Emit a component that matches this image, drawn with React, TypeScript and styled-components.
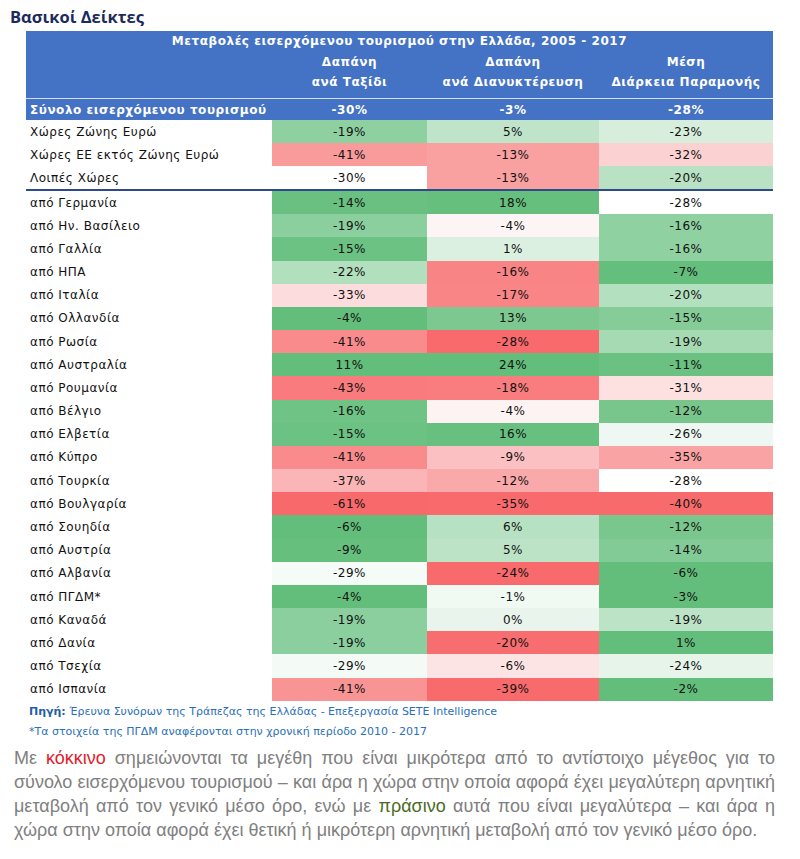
import React from "react";
import styled, { createGlobalStyle } from "styled-components";

const Global = createGlobalStyle`
  html, body { margin: 0; padding: 0; background: #ffffff; }
  body { font-family: "DejaVu Sans", Verdana, sans-serif; }
`;

const Page = styled.div`
  width: 800px;
  padding-top: 5px;
`;

const Heading = styled.h2`
  margin: 0 0 2px 10px;
  font-family: "Open Sans", "DejaVu Sans", sans-serif;
  font-weight: 700;
  font-size: 16.5px;
  line-height: 24px;
  color: #1c2b5c;
`;

const Table = styled.div`
  margin-left: 26px;
  width: 747px;
  font-family: "DejaVu Sans", Verdana, sans-serif;
  font-size: 12px;
  letter-spacing: 0.5px;
`;

const COLS = "246px 155px 172px 174px";

const TitleRow = styled.div`
  height: 20px;
  background: #4472c4;
  color: #ffffff;
  font-weight: bold;
  text-align: center;
  line-height: 20px;
  letter-spacing: 0.55px;
`;

const HeadRow = styled.div`
  display: grid;
  grid-template-columns: ${COLS};
  height: 47px;
  background: #4472c4;
  color: #ffffff;
  font-weight: bold;
  text-align: center;
  line-height: 20px;
  padding-top: 1px;
  box-sizing: border-box;
  letter-spacing: 0.55px;
`;

const TotalRow = styled.div`
  display: grid;
  grid-template-columns: ${COLS};
  height: 22px;
  border-top: 1px solid #d6e0f3;
  box-sizing: border-box;
  background: #4472c4;
  color: #ffffff;
  font-weight: bold;
  align-items: center;
  letter-spacing: 0.55px;
`;

const DataRow = styled.div<{ $h: number; $sep?: boolean }>`
  display: grid;
  grid-template-columns: ${COLS};
  height: ${(p) => p.$h}px;
  box-sizing: border-box;
  border-bottom: ${(p) => (p.$sep ? "2px solid #2d4a8a" : "none")};
  color: #111111;
`;

const Label = styled.div`
  padding-left: 4px;
  display: flex;
  align-items: center;
  white-space: nowrap;
`;

const Cell = styled.div<{ $bg: string }>`
  background: ${(p) => p.$bg};
  display: flex;
  align-items: center;
  justify-content: center;
`;

const HeadCell = styled.div``;

const Source = styled.div`
  margin: 1px 0 0 29px;
  font-family: "DejaVu Sans", Verdana, sans-serif;
  font-size: 11px;
  line-height: 20px;
  color: #2a6fba;
`;

const Strong = styled.span`
  font-weight: bold;
  color: #1f5fa8;
`;

const Paragraph = styled.p`
  margin: 4px 25px 0 14px;
  font-family: "Liberation Sans", Arial, sans-serif;
  font-size: 18px;
  line-height: 24px;
  color: #808080;
  text-align: justify;
`;

const Red = styled.span`
  color: #e3212b;
`;

const Green = styled.span`
  color: #4a6b1f;
`;

type C = [string, string];
type R = [string, C, C, C];

const groups: R[] = [
  ["Χώρες Ζώνης Ευρώ", ["-19%", "#8fd0a1"], ["5%", "#bfe4c9"], ["-23%", "#d7eedc"]],
  ["Χώρες ΕΕ εκτός Ζώνης Ευρώ", ["-41%", "#f99a9b"], ["-13%", "#f9a0a1"], ["-32%", "#fcd1d1"]],
  ["Λοιπές Χώρες", ["-30%", "#ffffff"], ["-13%", "#f9a0a1"], ["-20%", "#b9e2c4"]],
];

const countries: R[] = [
  ["από Γερμανία", ["-14%", "#69c081"], ["18%", "#66bf7d"], ["-28%", "#ffffff"]],
  ["από Ην. Βασίλειο", ["-19%", "#8bcf9e"], ["-4%", "#fdf5f5"], ["-16%", "#90d1a2"]],
  ["από Γαλλία", ["-15%", "#6cc283"], ["1%", "#dcf0e1"], ["-16%", "#90d1a2"]],
  ["από ΗΠΑ", ["-22%", "#b2dfbe"], ["-16%", "#f98486"], ["-7%", "#64be7c"]],
  ["από Ιταλία", ["-33%", "#fcdcdc"], ["-17%", "#f98587"], ["-20%", "#b3e0bf"]],
  ["από Ολλανδία", ["-4%", "#63be7b"], ["13%", "#7dc891"], ["-15%", "#86cc99"]],
  ["από Ρωσία", ["-41%", "#f98b8c"], ["-28%", "#f86a6c"], ["-19%", "#a5dab3"]],
  ["από Αυστραλία", ["11%", "#63be7b"], ["24%", "#63be7b"], ["-11%", "#6ac182"]],
  ["από Ρουμανία", ["-43%", "#f97b7d"], ["-18%", "#f97d7e"], ["-31%", "#fde0e0"]],
  ["από Βέλγιο", ["-16%", "#6ec385"], ["-4%", "#fdf3f3"], ["-12%", "#79c68d"]],
  ["από Ελβετία", ["-15%", "#6cc283"], ["16%", "#68c080"], ["-26%", "#eef7f1"]],
  ["από Κύπρο", ["-41%", "#f98b8c"], ["-9%", "#fbc0c1"], ["-35%", "#faa3a4"]],
  ["από Τουρκία", ["-37%", "#fbb5b6"], ["-12%", "#faa9aa"], ["-28%", "#ffffff"]],
  ["από Βουλγαρία", ["-61%", "#f8696b"], ["-35%", "#f86a6c"], ["-40%", "#f86b6d"]],
  ["από Σουηδία", ["-6%", "#63be7b"], ["6%", "#b6e1c2"], ["-12%", "#7ac78e"]],
  ["από Αυστρία", ["-9%", "#66bf7d"], ["5%", "#bde3c7"], ["-14%", "#82cb96"]],
  ["από Αλβανία", ["-29%", "#f5fbf7"], ["-24%", "#f86a6c"], ["-6%", "#63be7b"]],
  ["από ΠΓΔΜ*", ["-4%", "#63be7b"], ["-1%", "#f1f9f3"], ["-3%", "#63be7b"]],
  ["από Καναδά", ["-19%", "#8bcf9e"], ["0%", "#e9f5ec"], ["-19%", "#bde3c7"]],
  ["από Δανία", ["-19%", "#8bcf9e"], ["-20%", "#f86e70"], ["1%", "#63be7b"]],
  ["από Τσεχία", ["-29%", "#f4faf5"], ["-6%", "#fde4e4"], ["-24%", "#e6f4ea"]],
  ["από Ισπανία", ["-41%", "#f99495"], ["-39%", "#f86a6c"], ["-2%", "#63be7b"]],
];

const renderRow = (r: R, h: number, sep?: boolean) => (
  <DataRow key={r[0]} $h={h} $sep={sep}>
    <Label>{r[0]}</Label>
    {[r[1], r[2], r[3]].map((c, i) => (
      <Cell key={i} $bg={c[1]}>
        {c[0]}
      </Cell>
    ))}
  </DataRow>
);

export default function App() {
  return (
    <>
      <Global />
      <Page>
        <Heading>Βασικοί Δείκτες</Heading>
        <Table>
          <TitleRow>Μεταβολές εισερχόμενου τουρισμού στην Ελλάδα, 2005 - 2017</TitleRow>
          <HeadRow>
            <HeadCell />
            <HeadCell>
              Δαπάνη
              <br />
              ανά Ταξίδι
            </HeadCell>
            <HeadCell>
              Δαπάνη
              <br />
              ανά Διανυκτέρευση
            </HeadCell>
            <HeadCell>
              Μέση
              <br />
              Διάρκεια Παραμονής
            </HeadCell>
          </HeadRow>
          <TotalRow>
            <Label>Σύνολο εισερχόμενου τουρισμού</Label>
            <Cell $bg="transparent">-30%</Cell>
            <Cell $bg="transparent">-3%</Cell>
            <Cell $bg="transparent">-28%</Cell>
          </TotalRow>
          {groups.map((g, i) => renderRow(g, i === 2 ? 25 : 23, i === 2))}
          {countries.map((c) => renderRow(c, 23.18))}
        </Table>
        <Source>
          <Strong>Πηγή:</Strong> Έρευνα Συνόρων της Τράπεζας της Ελλάδας - Επεξεργασία SETE Intelligence
          <br />
          *Τα στοιχεία της ΠΓΔΜ αναφέρονται στην χρονική περίοδο 2010 - 2017
        </Source>
        <Paragraph>
          Με <Red>κόκκινο</Red> σημειώνονται τα μεγέθη που είναι μικρότερα από το αντίστοιχο μέγεθος για το
          σύνολο εισερχόμενου τουρισμού – και άρα η χώρα στην οποία αφορά έχει μεγαλύτερη αρνητική
          μεταβολή από τον γενικό μέσο όρο, ενώ με <Green>πράσινο</Green> αυτά που είναι μεγαλύτερα – και άρα η
          χώρα στην οποία αφορά έχει θετική ή μικρότερη αρνητική μεταβολή από τον γενικό μέσο όρο.
        </Paragraph>
      </Page>
    </>
  );
}
